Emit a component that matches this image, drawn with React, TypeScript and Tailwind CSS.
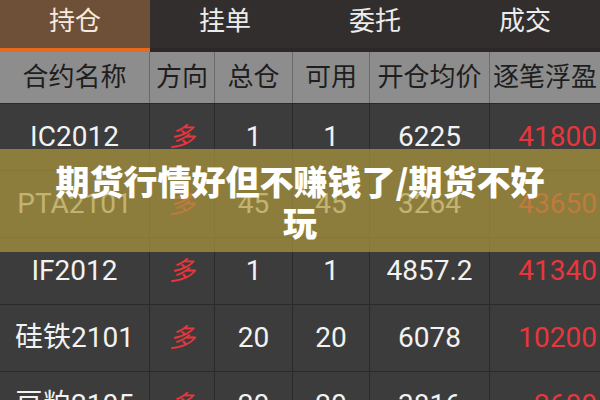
const tabs = ["持仓", "挂单", "委托", "成交"];
const heads = ["合约名称", "方向", "总仓", "可用", "开仓均价", "逐笔浮盈"];

const rows = [
  { name: "IC2012", dir: "多", total: "1", avail: "1", price: "6225", pnl: "41800" },
  { name: "PTA2101", dir: "多", total: "45", avail: "45", price: "3264", pnl: "43650" },
  { name: "IF2012", dir: "多", total: "1", avail: "1", price: "4857.2", pnl: "41340" },
  { name: "硅铁2101", dir: "多", total: "20", avail: "20", price: "6078", pnl: "10200" },
  { name: "豆粕2105", dir: "多", total: "20", avail: "20", price: "3816", pnl: "2600" },
];

const cols = "grid grid-cols-[150px_65px_78px_77px_120px_110px]";
const font = { fontFamily: '"Roboto", "Noto Sans CJK SC", sans-serif' };

export default function App() {
  return (
    <div className="relative h-[400px] w-[600px] overflow-hidden bg-[#3c3c3c]" style={font}>
      <div className="grid h-[52px] grid-cols-4">
        {tabs.map((t, i) => (
          <div
            key={t}
            className={`flex items-center justify-center border-b-4 pb-[6px] text-[26px] ${
              i === 0
                ? "border-[#e8691c] bg-[#6e4f38] text-[#f4ebe0]"
                : "border-[#2c2828] bg-[#322e2d] text-[#ececec]"
            }`}
          >
            {t}
          </div>
        ))}
      </div>

      <div className={`${cols} h-[51px] bg-[#8d8d8d] text-[26px] text-[#1e1e1e]`}>
        {heads.map((h, i) => (
          <div
            key={h}
            className={`flex items-center justify-center whitespace-nowrap ${i < 5 ? "border-r border-[#6a6a6a]" : ""}`}
          >
            {h}
          </div>
        ))}
      </div>

      {rows.map((r) => (
        <div key={r.name} className={`${cols} h-[67px] border-t border-[#2a2a2a] text-[28px] text-[#f2f2f2]`}>
          <div className="flex items-center justify-center border-r border-[#2a2a2a]">{r.name}</div>
          <div className="flex items-center justify-center border-r border-[#2a2a2a] text-[26px] italic text-[#e8363c]">
            {r.dir}
          </div>
          <div className="flex items-center justify-center border-r border-[#2a2a2a]">{r.total}</div>
          <div className="flex items-center justify-center border-r border-[#2a2a2a]">{r.avail}</div>
          <div className="flex items-center justify-center border-r border-[#2a2a2a]">{r.price}</div>
          <div className="flex items-center justify-end pr-[3px] text-[#e8363c]">{r.pnl}</div>
        </div>
      ))}

      <div className="absolute inset-x-0 top-[149px] flex h-[103px] items-center justify-center bg-[rgba(174,152,60,0.7)] px-10">
        <h1
          className="text-center text-[34px] font-black leading-[41px] text-white"
          style={{ fontFamily: '"Noto Sans CJK SC", sans-serif' }}
        >
          期货行情好但不赚钱了/期货不好玩
        </h1>
      </div>
    </div>
  );
}
